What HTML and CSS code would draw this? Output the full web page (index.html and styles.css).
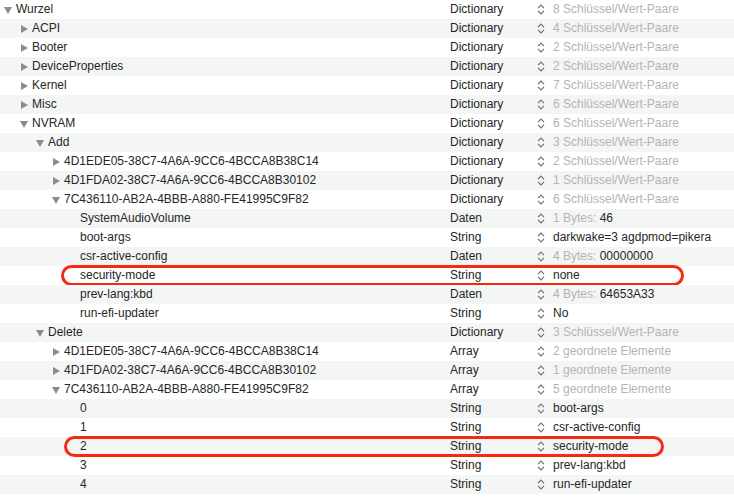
FILE: index.html
```html
<!DOCTYPE html>
<html lang="de">
<head>
<meta charset="utf-8">
<title>Plist</title>
<link rel="stylesheet" href="styles.css">
</head>
<body>
<div class="tree">
  <div class="row"><div class="name l0"><span class="disc"><svg class="down" viewBox="0 0 8 7"><path d="M0 0H8L4 7Z"/></svg></span>Wurzel</div><div class="type">Dictionary</div><div class="val"><svg class="chev" viewBox="0 0 8 11"><path d="M1 4.2L4 1.2L7 4.2M1 6.8L4 9.8L7 6.8"/></svg><span class="dim">8 Schlüssel/Wert-Paare</span></div></div>
  <div class="row"><div class="name l1"><span class="disc"><svg class="right" viewBox="0 0 7 8"><path d="M0 0L7 4L0 8Z"/></svg></span>ACPI</div><div class="type">Dictionary</div><div class="val"><svg class="chev" viewBox="0 0 8 11"><path d="M1 4.2L4 1.2L7 4.2M1 6.8L4 9.8L7 6.8"/></svg><span class="dim">4 Schlüssel/Wert-Paare</span></div></div>
  <div class="row"><div class="name l1"><span class="disc"><svg class="right" viewBox="0 0 7 8"><path d="M0 0L7 4L0 8Z"/></svg></span>Booter</div><div class="type">Dictionary</div><div class="val"><svg class="chev" viewBox="0 0 8 11"><path d="M1 4.2L4 1.2L7 4.2M1 6.8L4 9.8L7 6.8"/></svg><span class="dim">2 Schlüssel/Wert-Paare</span></div></div>
  <div class="row"><div class="name l1"><span class="disc"><svg class="right" viewBox="0 0 7 8"><path d="M0 0L7 4L0 8Z"/></svg></span>DeviceProperties</div><div class="type">Dictionary</div><div class="val"><svg class="chev" viewBox="0 0 8 11"><path d="M1 4.2L4 1.2L7 4.2M1 6.8L4 9.8L7 6.8"/></svg><span class="dim">2 Schlüssel/Wert-Paare</span></div></div>
  <div class="row"><div class="name l1"><span class="disc"><svg class="right" viewBox="0 0 7 8"><path d="M0 0L7 4L0 8Z"/></svg></span>Kernel</div><div class="type">Dictionary</div><div class="val"><svg class="chev" viewBox="0 0 8 11"><path d="M1 4.2L4 1.2L7 4.2M1 6.8L4 9.8L7 6.8"/></svg><span class="dim">7 Schlüssel/Wert-Paare</span></div></div>
  <div class="row"><div class="name l1"><span class="disc"><svg class="right" viewBox="0 0 7 8"><path d="M0 0L7 4L0 8Z"/></svg></span>Misc</div><div class="type">Dictionary</div><div class="val"><svg class="chev" viewBox="0 0 8 11"><path d="M1 4.2L4 1.2L7 4.2M1 6.8L4 9.8L7 6.8"/></svg><span class="dim">6 Schlüssel/Wert-Paare</span></div></div>
  <div class="row"><div class="name l1"><span class="disc"><svg class="down" viewBox="0 0 8 7"><path d="M0 0H8L4 7Z"/></svg></span>NVRAM</div><div class="type">Dictionary</div><div class="val"><svg class="chev" viewBox="0 0 8 11"><path d="M1 4.2L4 1.2L7 4.2M1 6.8L4 9.8L7 6.8"/></svg><span class="dim">6 Schlüssel/Wert-Paare</span></div></div>
  <div class="row"><div class="name l2"><span class="disc"><svg class="down" viewBox="0 0 8 7"><path d="M0 0H8L4 7Z"/></svg></span>Add</div><div class="type">Dictionary</div><div class="val"><svg class="chev" viewBox="0 0 8 11"><path d="M1 4.2L4 1.2L7 4.2M1 6.8L4 9.8L7 6.8"/></svg><span class="dim">3 Schlüssel/Wert-Paare</span></div></div>
  <div class="row"><div class="name l3"><span class="disc"><svg class="right" viewBox="0 0 7 8"><path d="M0 0L7 4L0 8Z"/></svg></span>4D1EDE05-38C7-4A6A-9CC6-4BCCA8B38C14</div><div class="type">Dictionary</div><div class="val"><svg class="chev" viewBox="0 0 8 11"><path d="M1 4.2L4 1.2L7 4.2M1 6.8L4 9.8L7 6.8"/></svg><span class="dim">2 Schlüssel/Wert-Paare</span></div></div>
  <div class="row"><div class="name l3"><span class="disc"><svg class="right" viewBox="0 0 7 8"><path d="M0 0L7 4L0 8Z"/></svg></span>4D1FDA02-38C7-4A6A-9CC6-4BCCA8B30102</div><div class="type">Dictionary</div><div class="val"><svg class="chev" viewBox="0 0 8 11"><path d="M1 4.2L4 1.2L7 4.2M1 6.8L4 9.8L7 6.8"/></svg><span class="dim">1 Schlüssel/Wert-Paare</span></div></div>
  <div class="row"><div class="name l3"><span class="disc"><svg class="down" viewBox="0 0 8 7"><path d="M0 0H8L4 7Z"/></svg></span>7C436110-AB2A-4BBB-A880-FE41995C9F82</div><div class="type">Dictionary</div><div class="val"><svg class="chev" viewBox="0 0 8 11"><path d="M1 4.2L4 1.2L7 4.2M1 6.8L4 9.8L7 6.8"/></svg><span class="dim">6 Schlüssel/Wert-Paare</span></div></div>
  <div class="row"><div class="name l4">SystemAudioVolume</div><div class="type">Daten</div><div class="val"><svg class="chev" viewBox="0 0 8 11"><path d="M1 4.2L4 1.2L7 4.2M1 6.8L4 9.8L7 6.8"/></svg><span class="dim">1 Bytes:</span>&nbsp;46</div></div>
  <div class="row"><div class="name l4">boot-args</div><div class="type">String</div><div class="val"><svg class="chev" viewBox="0 0 8 11"><path d="M1 4.2L4 1.2L7 4.2M1 6.8L4 9.8L7 6.8"/></svg>darkwake=3 agdpmod=pikera</div></div>
  <div class="row"><div class="name l4">csr-active-config</div><div class="type">Daten</div><div class="val"><svg class="chev" viewBox="0 0 8 11"><path d="M1 4.2L4 1.2L7 4.2M1 6.8L4 9.8L7 6.8"/></svg><span class="dim">4 Bytes:</span>&nbsp;00000000</div></div>
  <div class="row"><div class="name l4">security-mode</div><div class="type">String</div><div class="val"><svg class="chev" viewBox="0 0 8 11"><path d="M1 4.2L4 1.2L7 4.2M1 6.8L4 9.8L7 6.8"/></svg>none</div><div class="mark mark-a"></div></div>
  <div class="row"><div class="name l4">prev-lang:kbd</div><div class="type">Daten</div><div class="val"><svg class="chev" viewBox="0 0 8 11"><path d="M1 4.2L4 1.2L7 4.2M1 6.8L4 9.8L7 6.8"/></svg><span class="dim">4 Bytes:</span>&nbsp;64653A33</div></div>
  <div class="row"><div class="name l4">run-efi-updater</div><div class="type">String</div><div class="val"><svg class="chev" viewBox="0 0 8 11"><path d="M1 4.2L4 1.2L7 4.2M1 6.8L4 9.8L7 6.8"/></svg>No</div></div>
  <div class="row"><div class="name l2"><span class="disc"><svg class="down" viewBox="0 0 8 7"><path d="M0 0H8L4 7Z"/></svg></span>Delete</div><div class="type">Dictionary</div><div class="val"><svg class="chev" viewBox="0 0 8 11"><path d="M1 4.2L4 1.2L7 4.2M1 6.8L4 9.8L7 6.8"/></svg><span class="dim">3 Schlüssel/Wert-Paare</span></div></div>
  <div class="row"><div class="name l3"><span class="disc"><svg class="right" viewBox="0 0 7 8"><path d="M0 0L7 4L0 8Z"/></svg></span>4D1EDE05-38C7-4A6A-9CC6-4BCCA8B38C14</div><div class="type">Array</div><div class="val"><svg class="chev" viewBox="0 0 8 11"><path d="M1 4.2L4 1.2L7 4.2M1 6.8L4 9.8L7 6.8"/></svg><span class="dim">2 geordnete Elemente</span></div></div>
  <div class="row"><div class="name l3"><span class="disc"><svg class="right" viewBox="0 0 7 8"><path d="M0 0L7 4L0 8Z"/></svg></span>4D1FDA02-38C7-4A6A-9CC6-4BCCA8B30102</div><div class="type">Array</div><div class="val"><svg class="chev" viewBox="0 0 8 11"><path d="M1 4.2L4 1.2L7 4.2M1 6.8L4 9.8L7 6.8"/></svg><span class="dim">1 geordnete Elemente</span></div></div>
  <div class="row"><div class="name l3"><span class="disc"><svg class="down" viewBox="0 0 8 7"><path d="M0 0H8L4 7Z"/></svg></span>7C436110-AB2A-4BBB-A880-FE41995C9F82</div><div class="type">Array</div><div class="val"><svg class="chev" viewBox="0 0 8 11"><path d="M1 4.2L4 1.2L7 4.2M1 6.8L4 9.8L7 6.8"/></svg><span class="dim">5 geordnete Elemente</span></div></div>
  <div class="row"><div class="name l4">0</div><div class="type">String</div><div class="val"><svg class="chev" viewBox="0 0 8 11"><path d="M1 4.2L4 1.2L7 4.2M1 6.8L4 9.8L7 6.8"/></svg>boot-args</div></div>
  <div class="row"><div class="name l4">1</div><div class="type">String</div><div class="val"><svg class="chev" viewBox="0 0 8 11"><path d="M1 4.2L4 1.2L7 4.2M1 6.8L4 9.8L7 6.8"/></svg>csr-active-config</div></div>
  <div class="row"><div class="name l4">2</div><div class="type">String</div><div class="val"><svg class="chev" viewBox="0 0 8 11"><path d="M1 4.2L4 1.2L7 4.2M1 6.8L4 9.8L7 6.8"/></svg>security-mode</div><div class="mark mark-b"></div></div>
  <div class="row"><div class="name l4">3</div><div class="type">String</div><div class="val"><svg class="chev" viewBox="0 0 8 11"><path d="M1 4.2L4 1.2L7 4.2M1 6.8L4 9.8L7 6.8"/></svg>prev-lang:kbd</div></div>
  <div class="row"><div class="name l4">4</div><div class="type">String</div><div class="val"><svg class="chev" viewBox="0 0 8 11"><path d="M1 4.2L4 1.2L7 4.2M1 6.8L4 9.8L7 6.8"/></svg>run-efi-updater</div></div>
</div>
</body>
</html>
```
FILE: styles.css
```css
html, body {
  margin: 0;
  padding: 0;
  background: #ffffff;
}
body {
  font-family: "Liberation Sans", Arial, sans-serif;
  font-size: 12px;
  color: #262626;
  width: 734px;
  height: 498px;
  overflow: hidden;
}
.tree {
  display: flex;
  flex-direction: column;
}
.row {
  position: relative;
  display: flex;
  align-items: center;
  height: 19px;
  line-height: 19px;
  white-space: nowrap;
}
.row:nth-child(even) {
  background: #f4f5f5;
}
.name {
  width: 450px;
  flex: none;
  display: flex;
  align-items: center;
  overflow: hidden;
  box-sizing: border-box;
}
.l0 { padding-left: 16px; }
.l1 { padding-left: 32px; }
.l2 { padding-left: 48px; }
.l3 { padding-left: 64px; }
.l4 { padding-left: 80px; }
.disc {
  width: 12px;
  margin-left: -12px;
  height: 19px;
  display: flex;
  align-items: center;
  justify-content: flex-start;
}
.disc svg {
  fill: #8c8c8c;
  display: block;
}
.disc .down {
  width: 8px;
  height: 7px;
  margin-left: 0;
  margin-top: 1px;
}
.disc .right {
  width: 7px;
  height: 8px;
  margin-left: 1px;
}
.type {
  width: 86px;
  flex: none;
}
.val {
  flex: 1;
  display: flex;
  align-items: center;
}
.chev {
  width: 8px;
  height: 11px;
  margin-left: 1px;
  margin-right: 8px;
  fill: none;
  stroke: #707070;
  stroke-width: 1.2;
  flex: none;
}
.dim {
  color: #b4b4b4;
}
.mark {
  position: absolute;
  top: -1px;
  height: 21px;
  box-sizing: border-box;
  border: 3px solid #f42a12;
  border-radius: 11px;
  pointer-events: none;
}
.mark-a {
  left: 61px;
  width: 623px;
}
.mark-b {
  left: 64px;
  width: 600px;
}
```
